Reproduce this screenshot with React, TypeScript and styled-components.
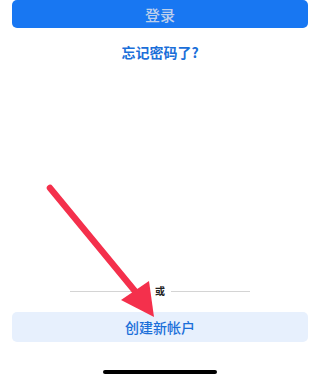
import React from 'react';
import styled, { createGlobalStyle } from 'styled-components';

const GlobalStyle = createGlobalStyle`
	html, body {
		margin: 0;
		padding: 0;
		background: #ffffff;
	}
	body {
		font-family: "Noto Sans CJK SC", "Noto Sans", sans-serif;
	}
`;

const Screen = styled.div`
	position: relative;
	width: 320px;
	height: 380px;
	overflow: hidden;
	display: flex;
	flex-direction: column;
	align-items: center;
	padding: 0 12px;
	box-sizing: border-box;
`;

const Button = styled.div<{ $variant: 'primary' | 'secondary' }>`
	width: 100%;
	display: flex;
	align-items: center;
	justify-content: center;
	border-radius: 5px;
	box-sizing: border-box;
	font-weight: 500;
	${({ $variant }) =>
		$variant === 'primary'
			? `
		height: 28px;
		font-size: 15px;
		background: #1877f2;
		color: #bccfec;
	`
			: `
		height: 30px;
		font-size: 14px;
		background: #e7f0fd;
		color: #1b6fd9;
	`}
`;

const LinkText = styled.div`
	margin-top: 14px;
	font-size: 14px;
	font-weight: 600;
	color: #1b6fd9;
	line-height: 20px;
`;

const Spacer = styled.div`
	flex: 1;
`;

const DividerRow = styled.div`
	width: 180px;
	display: flex;
	align-items: center;
	gap: 6px;
	margin-bottom: 14px;
`;

const Line = styled.div`
	flex: 1;
	height: 1px;
	background: #d4d4d4;
`;

const DividerText = styled.span`
	font-size: 10px;
	font-weight: 700;
	color: #222;
	line-height: 14px;
`;

const HomeIndicator = styled.div`
	width: 114px;
	height: 4px;
	border-radius: 2px;
	background: #000;
	margin: 28px 0 6px;
`;

const ArrowOverlay = styled.svg`
	position: absolute;
	left: 0;
	top: 0;
	pointer-events: none;
`;

const App = () => (
	<>
		<GlobalStyle />
		<Screen>
			<Button $variant="primary">登录</Button>
			<LinkText>忘记密码了?</LinkText>
			<Spacer />
			<DividerRow>
				<Line />
				<DividerText>或</DividerText>
				<Line />
			</DividerRow>
			<Button $variant="secondary">创建新帐户</Button>
			<HomeIndicator />
			<ArrowOverlay width="320" height="380" viewBox="0 0 320 380">
				<line x1="50" y1="188" x2="139" y2="296" stroke="#f4304c" strokeWidth="6.5" strokeLinecap="round" />
				<polygon points="154,317 121,300 149,281" fill="#f4304c" />
			</ArrowOverlay>
		</Screen>
	</>
);

export default App;
